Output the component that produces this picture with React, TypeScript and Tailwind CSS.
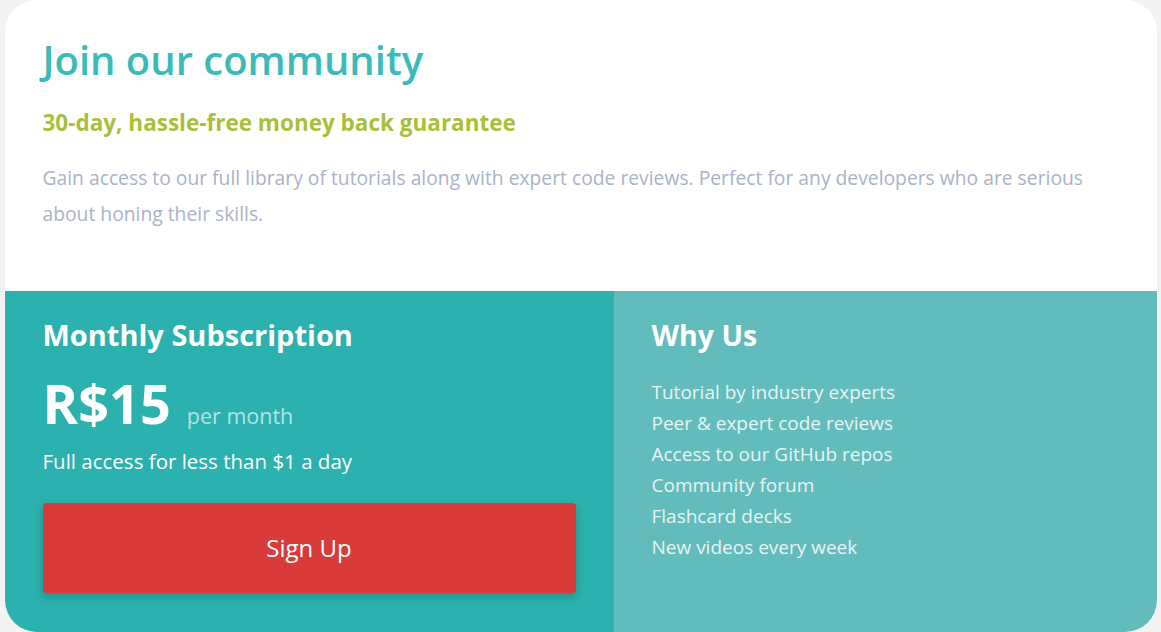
const features = [
  "Tutorial by industry experts",
  "Peer & expert code reviews",
  "Access to our GitHub repos",
  "Community forum",
  "Flashcard decks",
  "New videos every week",
];

export default function App() {
  return (
    <div
      className="min-h-screen bg-[#f3f3f3] flex justify-center"
      style={{ fontFamily: '"Open Sans", "Liberation Sans", sans-serif' }}
    >
      <div className="w-[1152px] h-[632px] bg-white rounded-[32px] overflow-hidden flex flex-col">
        <section className="h-[291px] px-[38px] pt-[34px]">
          <h1 className="text-[40px] leading-[52px] font-semibold text-[#3abbb9]">
            Join our community
          </h1>
          <h2 className="mt-[22px] text-[22.5px] leading-[30px] font-bold text-[#a9bf3b]">
            30-day, hassle-free money back guarantee
          </h2>
          <p className="mt-[22px] text-[19.3px] leading-[36px] text-[#a9b2c8] pr-[20px]">
            Gain access to our full library of tutorials along with expert code reviews. Perfect for any developers who
            are serious about honing their skills.
          </p>
        </section>

        <div className="flex-1 grid grid-cols-[609px_1fr]">
          <div className="bg-[#2bb1ae] px-[38px] pt-[25px] text-white">
            <h3 className="text-[29px] leading-[38px] font-bold">Monthly Subscription</h3>
            <div className="mt-[16px] flex items-baseline gap-[16px]">
              <span className="text-[54px] leading-[66px] font-bold">R$15</span>
              <span className="text-[21.5px] text-[#b5e3e1]">per month</span>
            </div>
            <p className="mt-[10px] text-[20.5px] leading-[30px]">Full access for less than $1 a day</p>
            <button className="mt-[27px] w-[533px] h-[90px] rounded-[4px] bg-[#d93a3a] text-[24px] text-white shadow-[0_4px_8px_rgba(0,0,0,0.2)]">
              Sign Up
            </button>
          </div>
          <div className="bg-[#61bcbb] px-[38px] pt-[25px] text-white">
            <h3 className="text-[28.5px] leading-[38px] font-bold">Why Us</h3>
            <ul className="mt-[23px] text-[19px] leading-[31px] text-[#e7f5f4]">
              {features.map((f) => (
                <li key={f}>{f}</li>
              ))}
            </ul>
          </div>
        </div>
      </div>
    </div>
  );
}
